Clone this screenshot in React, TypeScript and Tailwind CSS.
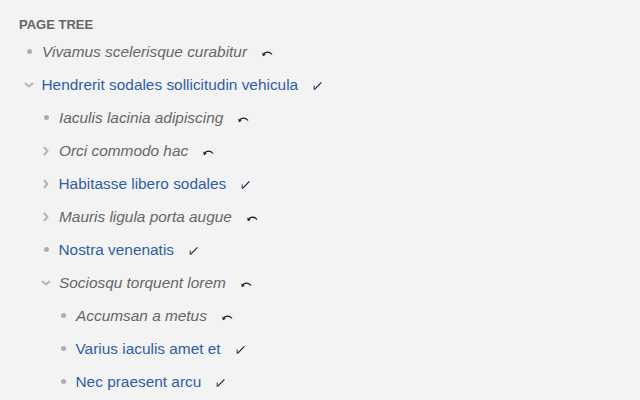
type Node = {
  label: string;
  link?: boolean;
  state?: "open" | "closed";
  children?: Node[];
};

const tree: Node[] = [
  { label: "Vivamus scelerisque curabitur" },
  {
    label: "Hendrerit sodales sollicitudin vehicula",
    link: true,
    state: "open",
    children: [
      { label: "Iaculis lacinia adipiscing" },
      { label: "Orci commodo hac", state: "closed" },
      { label: "Habitasse libero sodales", link: true, state: "closed" },
      { label: "Mauris ligula porta augue", state: "closed" },
      { label: "Nostra venenatis", link: true },
      {
        label: "Sociosqu torquent lorem",
        state: "open",
        children: [
          { label: "Accumsan a metus" },
          { label: "Varius iaculis amet et", link: true },
          { label: "Nec praesent arcu", link: true },
        ],
      },
    ],
  },
];

function Marker({ state }: { state?: "open" | "closed" }) {
  if (state === "open") {
    return (
      <svg width="10" height="6" viewBox="0 0 10 6" fill="none" stroke="#b4b4b4" strokeWidth="2">
        <path d="M1 1l4 3.4L9 1" />
      </svg>
    );
  }
  if (state === "closed") {
    return (
      <svg width="6" height="10" viewBox="0 0 6 10" fill="none" stroke="#b4b4b4" strokeWidth="2">
        <path d="M1 1l3.4 4L1 9" />
      </svg>
    );
  }
  return <span className="block w-[5px] h-[5px] rounded-full bg-[#adadad]" />;
}

function UndoMark() {
  return (
    <svg width="11" height="7" viewBox="0 0 11 7" fill="none" className="mt-[3px]">
      <path d="M1.5 4.5C3 1.6 7.5 1 10 4.5" stroke="#111" strokeWidth="1.2" />
      <path d="M0.2 2.6l0.6 3.6 3-1.4z" fill="#222" />
    </svg>
  );
}

function CheckMark() {
  return (
    <svg width="9" height="9" viewBox="0 0 9 9" fill="none" className="mt-[2px]">
      <path d="M1.2 4.4V8.8" stroke="#5a4560" strokeWidth="1.2" />
      <path d="M1.6 8.4L8.4 1.4" stroke="#14144e" strokeWidth="1.1" />
    </svg>
  );
}

function Row({ node }: { node: Node }) {
  return (
    <li>
      <div className="h-[33px] flex items-center">
        <span className="w-[23px] shrink-0 flex items-center justify-center pr-[3px]">
          <Marker state={node.state} />
        </span>
        {node.link ? (
          <a href="#" className="text-[#2f5ea6] -ml-[0.5px]">
            {node.label}
          </a>
        ) : (
          <span className="italic text-[#666666]">{node.label}</span>
        )}
        <span className="ml-[15px]">{node.link ? <CheckMark /> : <UndoMark />}</span>
      </div>
      {node.children && (
        <ul className="pl-[17px]">
          {node.children.map((child) => (
            <Row key={child.label} node={child} />
          ))}
        </ul>
      )}
    </li>
  );
}

export default function App() {
  return (
    <div className="w-[640px] h-[400px] overflow-hidden bg-[#f3f3f3] px-[19px] pt-[18px] font-['Liberation_Sans',Arial,sans-serif] text-[15.4px]">
      <h2 className="text-[13px] leading-[14px] font-bold text-[#666666] mb-[3px]">PAGE TREE</h2>
      <ul>
        {tree.map((node) => (
          <Row key={node.label} node={node} />
        ))}
      </ul>
    </div>
  );
}
